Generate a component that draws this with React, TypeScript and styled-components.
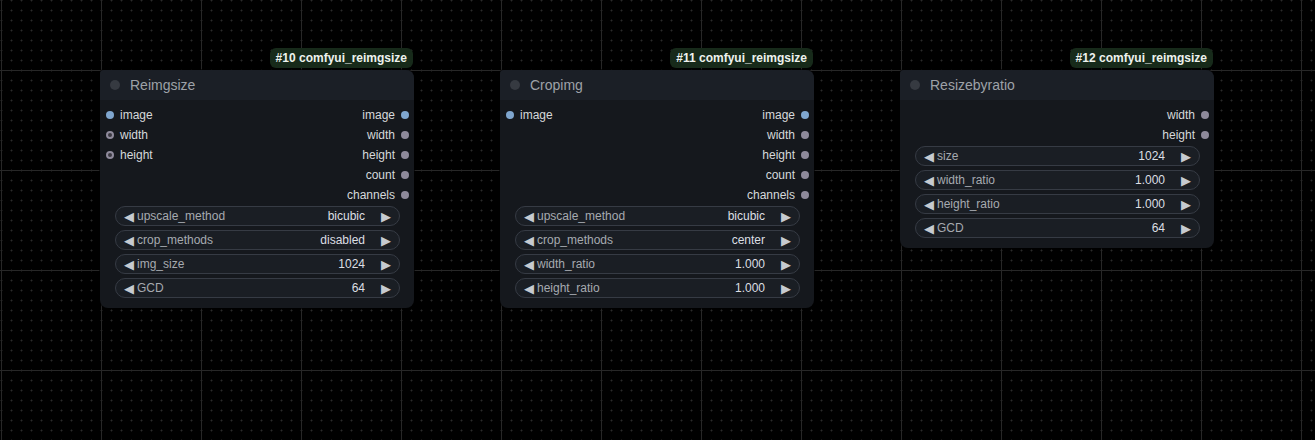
import styled, { createGlobalStyle } from "styled-components";

const GlobalStyle = createGlobalStyle`
  html, body {
    margin: 0;
    padding: 0;
    background: #000;
  }
  body {
    font-family: "Liberation Sans", Arial, sans-serif;
  }
`;

const Canvas = styled.div`
  position: relative;
  width: 1315px;
  height: 440px;
  overflow: hidden;
  background: #000;
`;

const Backdrop = styled.svg`
  position: absolute;
  inset: 0;
`;

const Node = styled.div<{ $x: number; $y: number }>`
  position: absolute;
  left: ${(p) => p.$x}px;
  top: ${(p) => p.$y}px;
  width: 314px;
  background: #15181d;
  border-radius: 4px 8px 8px 8px;
  box-shadow: 0 0 0 1px rgba(0, 0, 0, 0.6);
  display: flex;
  flex-direction: column;
  padding-bottom: 10px;
`;

const Badge = styled.div`
  position: absolute;
  right: 1px;
  bottom: calc(100% + 2px);
  height: 20px;
  padding: 0 6px;
  border-radius: 6px;
  background: #172a1a;
  color: #eef2ee;
  font-size: 12px;
  font-weight: 700;
  display: flex;
  align-items: center;
  white-space: nowrap;
`;

const TitleBar = styled.div`
  height: 30px;
  background: #1b1f26;
  border-radius: 4px 8px 0 0;
  display: flex;
  align-items: center;
  gap: 10px;
  padding-left: 10px;
  margin-bottom: 5px;
`;

const TitleDot = styled.span`
  width: 10px;
  height: 10px;
  border-radius: 50%;
  background: #363a41;
`;

const TitleText = styled.span`
  color: #9ea2a8;
  font-size: 14px;
`;

const Slots = styled.div`
  display: flex;
  justify-content: space-between;
  margin-bottom: 1px;
`;

const SlotColumn = styled.div<{ $side: "in" | "out" }>`
  display: flex;
  flex-direction: column;
  align-items: ${(p) => (p.$side === "in" ? "flex-start" : "flex-end")};
`;

const SlotRow = styled.div<{ $side: "in" | "out" }>`
  height: 20px;
  display: flex;
  align-items: center;
  gap: 6px;
  flex-direction: ${(p) => (p.$side === "in" ? "row" : "row-reverse")};
  padding: ${(p) => (p.$side === "in" ? "0 0 0 6px" : "0 5px 0 0")};
  color: #d6d8db;
  font-size: 12px;
`;

const SlotDot = styled.span<{ $kind: "image" | "int" | "ring" }>`
  width: 8px;
  height: 8px;
  border-radius: 50%;
  box-sizing: border-box;
  background: ${(p) =>
    p.$kind === "image" ? "#7fa6cf" : p.$kind === "ring" ? "#3a3841" : "#8e8a9b"};
  border: ${(p) => (p.$kind === "ring" ? "2px solid #8e8a9b" : "none")};
`;

const Widgets = styled.div`
  display: flex;
  flex-direction: column;
  gap: 4px;
  padding: 0 14px 0 15px;
`;

const Widget = styled.div`
  height: 20px;
  box-sizing: border-box;
  border: 1px solid #363b44;
  border-radius: 10px;
  background: #1a1e24;
  display: flex;
  align-items: center;
  padding: 0 6px 0 6px;
  font-size: 12px;
`;

const Arrow = styled.span`
  color: #c6cad0;
  font-size: 13px;
  width: 14px;
  display: flex;
  justify-content: center;
`;

const WidgetLabel = styled.span`
  color: #a6aab0;
  margin-left: 1px;
  flex: 1;
`;

const WidgetValue = styled.span`
  color: #dcdfe3;
  margin-right: 14px;
`;

type Slot = { name: string; kind: "image" | "int" | "ring" };

type NodeData = {
  id: number;
  x: number;
  title: string;
  inputs: Slot[];
  outputs: Slot[];
  widgets: [string, string][];
};

const nodes: NodeData[] = [
  {
    id: 10,
    x: 100,
    title: "Reimgsize",
    inputs: [
      { name: "image", kind: "image" },
      { name: "width", kind: "ring" },
      { name: "height", kind: "ring" },
    ],
    outputs: [
      { name: "image", kind: "image" },
      { name: "width", kind: "int" },
      { name: "height", kind: "int" },
      { name: "count", kind: "int" },
      { name: "channels", kind: "int" },
    ],
    widgets: [
      ["upscale_method", "bicubic"],
      ["crop_methods", "disabled"],
      ["img_size", "1024"],
      ["GCD", "64"],
    ],
  },
  {
    id: 11,
    x: 500,
    title: "Cropimg",
    inputs: [{ name: "image", kind: "image" }],
    outputs: [
      { name: "image", kind: "image" },
      { name: "width", kind: "int" },
      { name: "height", kind: "int" },
      { name: "count", kind: "int" },
      { name: "channels", kind: "int" },
    ],
    widgets: [
      ["upscale_method", "bicubic"],
      ["crop_methods", "center"],
      ["width_ratio", "1.000"],
      ["height_ratio", "1.000"],
    ],
  },
  {
    id: 12,
    x: 900,
    title: "Resizebyratio",
    inputs: [],
    outputs: [
      { name: "width", kind: "int" },
      { name: "height", kind: "int" },
    ],
    widgets: [
      ["size", "1024"],
      ["width_ratio", "1.000"],
      ["height_ratio", "1.000"],
      ["GCD", "64"],
    ],
  },
];

const GridBackdrop = () => (
  <Backdrop width="1315" height="440">
    <defs>
      <pattern id="dots" x="1" y="0" width="10" height="10" patternUnits="userSpaceOnUse">
        <rect x="0" y="0" width="1" height="1" fill="#2a2a2a" />
        <rect x="9" y="0" width="1" height="1" fill="#141414" />
        <rect x="1" y="0" width="1" height="1" fill="#141414" />
        <rect x="0" y="9" width="1" height="1" fill="#141414" />
        <rect x="0" y="1" width="1" height="1" fill="#141414" />
      </pattern>
      <pattern id="lines" x="1" y="70" width="100" height="100" patternUnits="userSpaceOnUse">
        <rect x="0" y="0" width="1" height="100" fill="#272727" />
        <rect x="0" y="0" width="100" height="1" fill="#272727" />
      </pattern>
    </defs>
    <rect width="1315" height="440" fill="url(#dots)" />
    <rect width="1315" height="440" fill="url(#lines)" />
  </Backdrop>
);

const GraphNode = ({ node }: { node: NodeData }) => (
  <Node $x={node.x} $y={70}>
    <Badge>#{node.id} comfyui_reimgsize</Badge>
    <TitleBar>
      <TitleDot />
      <TitleText>{node.title}</TitleText>
    </TitleBar>
    <Slots>
      <SlotColumn $side="in">
        {node.inputs.map((s) => (
          <SlotRow key={s.name} $side="in">
            <SlotDot $kind={s.kind} />
            {s.name}
          </SlotRow>
        ))}
      </SlotColumn>
      <SlotColumn $side="out">
        {node.outputs.map((s) => (
          <SlotRow key={s.name} $side="out">
            <SlotDot $kind={s.kind} />
            {s.name}
          </SlotRow>
        ))}
      </SlotColumn>
    </Slots>
    <Widgets>
      {node.widgets.map(([label, value]) => (
        <Widget key={label}>
          <Arrow>◀</Arrow>
          <WidgetLabel>{label}</WidgetLabel>
          <WidgetValue>{value}</WidgetValue>
          <Arrow>▶</Arrow>
        </Widget>
      ))}
    </Widgets>
  </Node>
);

const App = () => (
  <>
    <GlobalStyle />
    <Canvas>
      <GridBackdrop />
      {nodes.map((n) => (
        <GraphNode key={n.id} node={n} />
      ))}
    </Canvas>
  </>
);

export default App;
